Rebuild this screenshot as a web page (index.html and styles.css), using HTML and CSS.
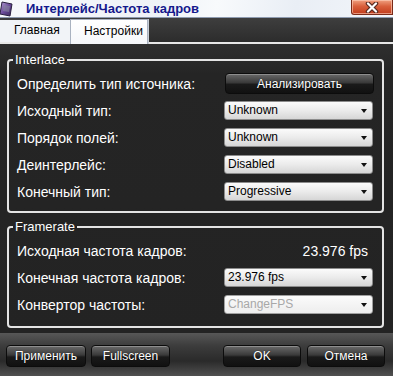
FILE: index.html
```html
<!DOCTYPE html>
<html>
<head>
<meta charset="utf-8">
<link rel="stylesheet" href="styles.css">
</head>
<body>

<div class="window">
  <!-- заголовок окна -->
  <div class="titlebar">
    <svg class="app-icon" width="14" height="16" viewBox="0 0 14 16">
      <defs>
        <linearGradient id="ig" x1="0" y1="0" x2="1" y2="1">
          <stop offset="0" stop-color="#b9a6d6"/>
          <stop offset="0.5" stop-color="#6a4a9a"/>
          <stop offset="1" stop-color="#3a2a5a"/>
        </linearGradient>
      </defs>
      <path d="M2 1 L12 3 L10 15 L0 13 Z" fill="url(#ig)" stroke="#2a2040" stroke-width="1"/>
      <path d="M4 4 L10 5 L9 11 L3 10 Z" fill="#8a8aa0" opacity="0.6"/>
    </svg>
    <span class="title">Интерлейс/Частота кадров</span>
    <span class="close">
      <svg width="16" height="11" viewBox="0 0 16 11">
        <path d="M4 1.5 L12 9.5 M12 1.5 L4 9.5" stroke="#5a2a20" stroke-width="4.5" stroke-linecap="round"/>
        <path d="M4 1.5 L12 9.5 M12 1.5 L4 9.5" stroke="#ffffff" stroke-width="2.2" stroke-linecap="round"/>
      </svg>
    </span>
  </div>

  <!-- вкладки -->
  <div class="tabs">
    <span class="tab">Главная</span>
    <span class="tab active">Настройки</span>
  </div>

  <div class="page">
    <fieldset class="group">
      <legend>Interlace</legend>
      <div class="row">
        <span class="label">Определить тип источника:</span>
        <button class="dark-btn analyze">Анализировать</button>
      </div>
      <div class="row">
        <span class="label">Исходный тип:</span>
        <div class="combo">Unknown</div>
      </div>
      <div class="row">
        <span class="label">Порядок полей:</span>
        <div class="combo">Unknown</div>
      </div>
      <div class="row">
        <span class="label">Деинтерлейс:</span>
        <div class="combo">Disabled</div>
      </div>
      <div class="row">
        <span class="label">Конечный тип:</span>
        <div class="combo">Progressive</div>
      </div>
    </fieldset>

    <fieldset class="group framerate">
      <legend>Framerate</legend>
      <div class="row">
        <span class="label">Исходная частота кадров:</span>
        <span class="value">23.976 fps</span>
      </div>
      <div class="row">
        <span class="label">Конечная частота кадров:</span>
        <div class="combo">23.976 fps</div>
      </div>
      <div class="row">
        <span class="label">Конвертор частоты:</span>
        <div class="combo disabled">ChangeFPS</div>
      </div>
    </fieldset>
  </div>

  <!-- нижние кнопки -->
  <div class="footer">
    <div class="btn-group">
      <button class="dark-btn w80">Применить</button>
      <button class="dark-btn w79">Fullscreen</button>
    </div>
    <div class="btn-group">
      <button class="dark-btn w78">OK</button>
      <button class="dark-btn w78">Отмена</button>
    </div>
  </div>
</div>

</body>
</html>
```

FILE: styles.css
```css
/* основа */
html, body {
  margin: 0;
  padding: 0;
}
body {
  font-family: "Liberation Sans", Arial, sans-serif;
  font-size: 13px;
  background: #242424;
}
.window {
  width: 393px;
  height: 376px;
  overflow: hidden;
  display: flex;
  flex-direction: column;
}

/* заголовок */
.titlebar {
  height: 17px;
  display: flex;
  align-items: center;
  background: linear-gradient(100deg, #f7f9fc 0%, #eef2f7 40%, #f8fafc 55%, #e9eef5 75%, #f3f6fa 100%);
  border-bottom: 1px solid #8e9bb0;
  position: relative;
}
.app-icon {
  margin-top: 1px;
}
.title {
  margin-left: 12px;
  font-weight: bold;
  font-size: 13px;
  color: #14198c;
}
.close {
  position: absolute;
  right: 0;
  top: 0;
  width: 40px;
  height: 14px;
  display: flex;
  align-items: center;
  justify-content: center;
  background: linear-gradient(#f0a080 0%, #d9603c 45%, #c23c1c 100%);
  border: 1px solid #7a2a18;
  border-top: none;
  border-radius: 0 0 0 3px;
  box-shadow: inset 0 0 0 1px rgba(255, 210, 190, 0.6);
}

/* вкладки */
.tabs {
  height: 24px;
  display: flex;
  align-items: flex-end;
  background: linear-gradient(#3e3e3e, #2c2c2c);
  border-bottom: 2px solid #e8e8e8;
}
.tab {
  height: 22px;
  line-height: 21px;
  font-size: 12px;
  color: #000;
  background: #f1f3f7;
  box-sizing: border-box;
}
.tab:first-child {
  width: 70px;
  padding-left: 14px;
}
.tab.active {
  width: 78px;
  padding-left: 13px;
  background: linear-gradient(#ffffff, #f5f7fa);
  border: 1px solid #a9b2c0;
  border-bottom: none;
  box-shadow: 1px 0 0 #c7ccd4;
  margin-bottom: -2px;
  height: 25px;
  line-height: 23px;
}

/* страница */
.page {
  flex: 1;
  background: linear-gradient(#2f2f2f 0, #252525 30px, #232323 100%);
  padding-top: 9px;
}
.group {
  margin: 0 9px 0 7px;
  border: 2px solid #e4e4e4;
  border-radius: 4px;
  padding: 3px 9px 6px 9px;
}
.group legend {
  color: #fff;
  font-size: 13px;
  line-height: 14px;
  padding: 0 2px;
  margin-left: -5px;
}
.framerate {
  margin-top: 7px;
  padding-top: 3px;
  padding-bottom: 8px;
}
.row {
  height: 27px;
  display: grid;
  grid-template-columns: 1fr 149px;
  align-items: center;
  color: #fff;
  font-size: 14px;
}
.label {
  white-space: nowrap;
  margin-left: -1px;
}
.value {
  text-align: right;
  padding-right: 5px;
}

/* выпадающие списки */
.combo {
  height: 17px;
  line-height: 17px;
  border: 1px solid #8c8c8c;
  border-radius: 3px;
  padding-left: 3px;
  font-size: 12px;
  color: #000;
  background: linear-gradient(#fbfbfb 0%, #ebebeb 50%, #d6d6d6 100%);
  position: relative;
}
.combo::after {
  content: "";
  position: absolute;
  right: 5px;
  top: 7px;
  border-left: 3px solid transparent;
  border-right: 3px solid transparent;
  border-top: 4px solid #111;
}
.combo.disabled {
  color: #a8a8a8;
  background: linear-gradient(#fbfbfb, #ededed);
  border-color: #a0a0a0;
}

/* тёмные кнопки */
.dark-btn {
  font-family: "Liberation Sans", Arial, sans-serif;
  font-size: 12px;
  color: #fff;
  border: 1px solid #0c0c0c;
  border-radius: 4px;
  background: linear-gradient(#6a6a6a 0%, #3a3a3a 45%, #1a1a1a 55%, #111 100%);
  box-shadow: inset 0 1px 0 rgba(255, 255, 255, 0.25);
  padding: 0;
  text-shadow: 0 0 1px #000;
}
.analyze {
  height: 21px;
  width: 149px;
  margin-left: 1px;
}

/* низ окна */
.footer {
  height: 43px;
  display: flex;
  justify-content: space-between;
  align-items: flex-start;
  padding: 12px 8px 0 6px;
  box-sizing: border-box;
  background: linear-gradient(#575757 0%, #3c3c3c 30%, #2a2a2a 65%, #505050 100%);
}
.btn-group {
  display: flex;
  gap: 5px;
}
.btn-group + .btn-group {
  gap: 6px;
}
.footer .dark-btn {
  height: 22px;
}
.w80 { width: 80px; }
.w79 { width: 79px; }
.w78 { width: 78px; }
```
